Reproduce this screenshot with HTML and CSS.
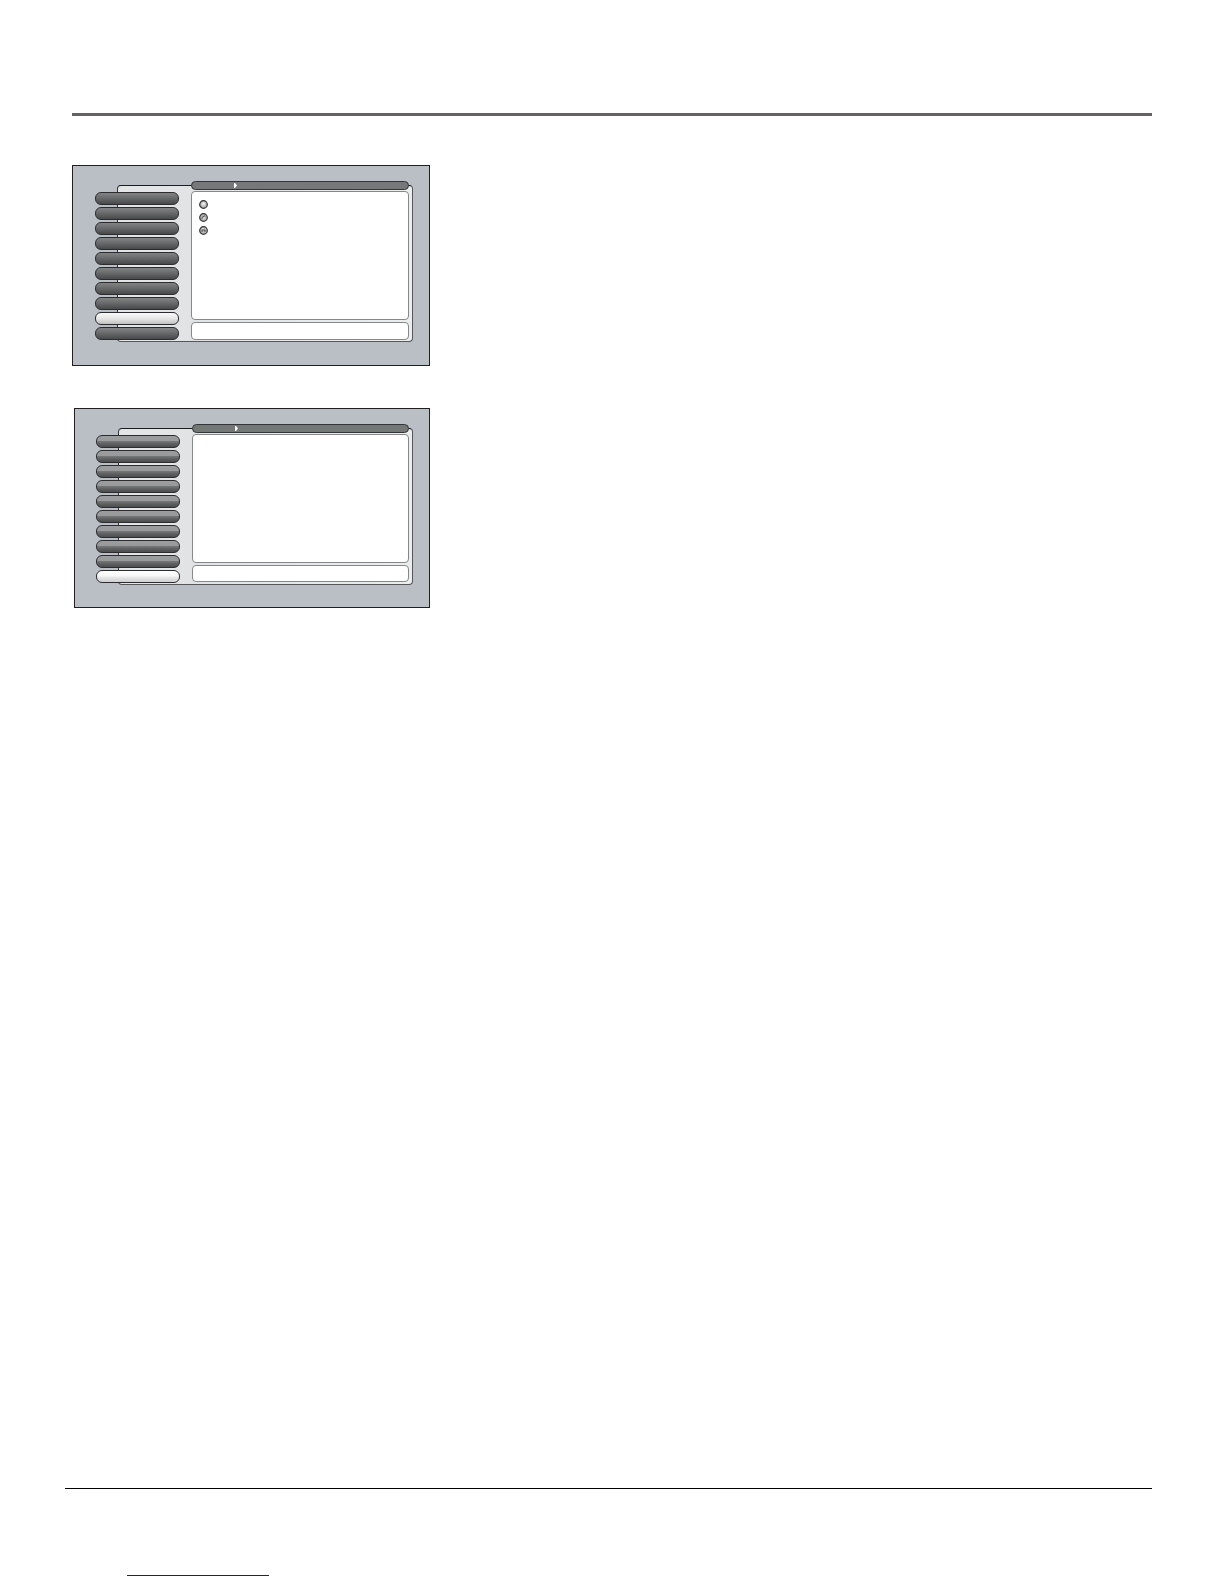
FILE: index.html
```html
<!DOCTYPE html>
<html lang="en">
<head>
    <meta charset="UTF-8">
    <title>Menus</title>
    <link rel="stylesheet" href="styles.css">
</head>
<body>
    <header class="page-header"></header>

    <main class="content">
        <!-- First menu screen -->
        <section class="screen">
            <div class="panel"></div>
            <nav class="menu">
                <button class="item" aria-label="Item 1"></button>
                <button class="item" aria-label="Item 2"></button>
                <button class="item" aria-label="Item 3"></button>
                <button class="item" aria-label="Item 4"></button>
                <button class="item" aria-label="Item 5"></button>
                <button class="item" aria-label="Item 6"></button>
                <button class="item" aria-label="Item 7"></button>
                <button class="item" aria-label="Item 8"></button>
                <button class="item selected" aria-label="Item 9"></button>
                <button class="item" aria-label="Item 10"></button>
            </nav>
            <div class="details">
                <div class="title-bar">
                    <svg class="arrow" viewBox="0 0 3 5"><path d="M0 0H1L3 2.5L1 5H0Z" fill="#fff"/></svg>
                </div>
                <div class="view">
                    <svg class="bullet" viewBox="0 0 9 9">
                        <circle cx="4.5" cy="4.5" r="3.8" fill="#b4b4b4" stroke="#333" stroke-width="1.2"/>
                        <circle cx="4.5" cy="4" r="2.1" fill="#dedede"/>
                        <path d="M4 3H5V4H4Z" fill="#fff"/>
                    </svg>
                    <svg class="bullet" viewBox="0 0 9 9">
                        <circle cx="4.5" cy="4.5" r="3.8" fill="#b8b8b8" stroke="#333" stroke-width="1.2"/>
                        <path d="M3 6V4.5L5 3H6.5" fill="none" stroke="#555"/>
                        <path d="M4 6L6 4.5" stroke="#eee"/>
                    </svg>
                    <svg class="bullet" viewBox="0 0 9 9">
                        <circle cx="4.5" cy="4.5" r="3.8" fill="#b8b8b8" stroke="#333" stroke-width="1.2"/>
                        <path d="M3 6V4H6V6" fill="none" stroke="#555"/>
                        <path d="M3 2.5H5" stroke="#ddd"/>
                    </svg>
                </div>
                <div class="hint"></div>
            </div>
        </section>

        <!-- Second menu screen -->
        <section class="screen glossy">
            <div class="panel"></div>
            <nav class="menu">
                <button class="item" aria-label="Item 1"></button>
                <button class="item" aria-label="Item 2"></button>
                <button class="item" aria-label="Item 3"></button>
                <button class="item" aria-label="Item 4"></button>
                <button class="item" aria-label="Item 5"></button>
                <button class="item" aria-label="Item 6"></button>
                <button class="item" aria-label="Item 7"></button>
                <button class="item" aria-label="Item 8"></button>
                <button class="item" aria-label="Item 9"></button>
                <button class="item selected" aria-label="Item 10"></button>
            </nav>
            <div class="details">
                <div class="title-bar">
                    <svg class="arrow" viewBox="0 0 3 5"><path d="M0 0H1L3 2.5L1 5H0Z" fill="#fff"/></svg>
                </div>
                <div class="view"></div>
                <div class="hint"></div>
            </div>
        </section>
    </main>

    <footer class="page-footer">
        <a class="footer-link" href="#" aria-label="Website"></a>
    </footer>
</body>
</html>
```
FILE: styles.css
```css
* {
    box-sizing: border-box;
}
body {
    margin: 0;
    padding: 113px 72px 0 65px;
    min-height: 100vh;
    display: flex;
    flex-direction: column;
    background: #fff;
    font-family: "Liberation Sans", Arial, sans-serif;
}
.page-header {
    margin-left: 7px;
    border-top: 3px solid #656263;
}
.content {
    flex: 1;
    margin-left: 7px;
    padding-top: 49px;
    display: flex;
    flex-direction: column;
    gap: 42px;
    max-width: 358px;
}

/* menu screens */
.screen {
    display: grid;
    grid-template-columns: 22px 62px 1fr;
    padding: 15px 16px 23px 22px;
    border: 1px solid #231f20;
    background: #babfc6;
}
.panel {
    grid-area: 1 / 2 / 2 / 4;
    margin-top: 4px;
    border: 1px solid #555759;
    border-top-color: #1c1c1e;
    border-left-color: #333;
    border-radius: 4px;
    background: linear-gradient(to right, #e4e5e7, #e2e3e5 25%, #eceded);
}
.menu {
    grid-area: 1 / 1 / 2 / 3;
    display: flex;
    flex-direction: column;
    gap: 2px;
    padding: 11px 0 2px;
}
.item {
    height: 13px;
    padding: 0;
    border: 1px solid #2c2c2e;
    border-radius: 6px;
    background: linear-gradient(#828384, #6c6d6e 40%, #48494b);
    cursor: pointer;
}
.item.selected {
    background: linear-gradient(#fafafa, #e6e7e6 50%, #c0c1c0);
}
.details {
    grid-area: 1 / 3 / 2 / 4;
    display: flex;
    flex-direction: column;
    margin: 0 4px 0 12px;
    padding-bottom: 2px;
}
.title-bar {
    height: 9px;
    margin-bottom: 1px;
    padding-left: 42px;
    display: flex;
    align-items: center;
    border: 1px solid #343537;
    border-radius: 5px;
    background: #77787a;
}
.arrow {
    width: 3px;
    height: 5px;
}
.view {
    flex: 1;
    display: flex;
    flex-direction: column;
    gap: 4px;
    padding: 8px 7px;
    border: 1px solid #85878a;
    border-radius: 4px;
    background: #fff;
}
.bullet {
    width: 9px;
    height: 9px;
}
.hint {
    height: 18px;
    margin-top: 2px;
    border: 1px solid #85878a;
    border-radius: 4px;
    background: #fff;
}

/* glossy variant */
.glossy {
    margin-left: 2px;
    padding: 15px 16px 22px 21px;
}
.glossy .item {
    background: linear-gradient(#9c9d9e, #98999a 45%, #77787a 46%, #5c5d5f 75%, #4c4d4f);
}
.glossy .item.selected {
    background: linear-gradient(#fff, #f7f7f8 45%, #e6e6e8 60%, #cfcfd1);
}
.glossy .title-bar {
    background: #737876;
}
.glossy .details {
    padding-bottom: 3px;
}
.glossy .hint {
    height: 17px;
}

.page-footer {
    padding: 71px 0 8px 62px;
    border-top: 1px solid #000;
}
.footer-link {
    display: block;
    width: 142px;
    height: 16px;
    border-bottom: 1px solid #1a1a8c;
}
```
